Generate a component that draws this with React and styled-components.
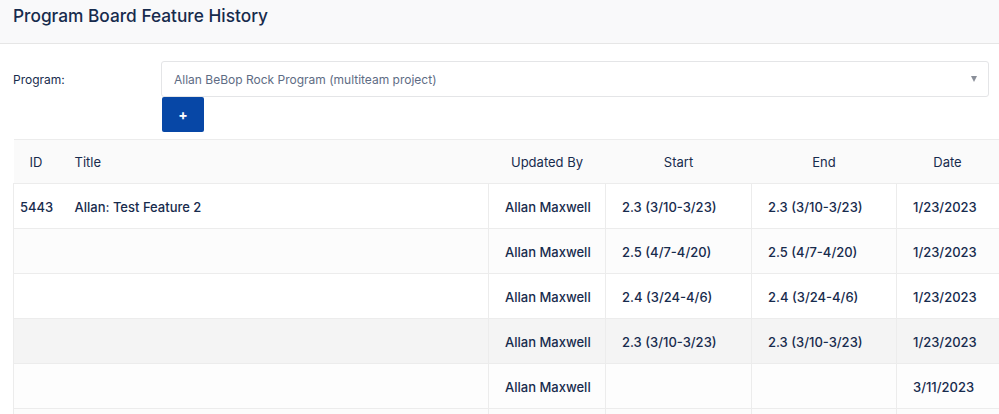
import React from "react";
import styled, { createGlobalStyle } from "styled-components";

const GlobalStyle = createGlobalStyle`
  body {
    margin: 0;
    background: #ffffff;
    font-family: Inter, "Noto Sans", "Liberation Sans", sans-serif;
    color: #172b4d;
  }
`;

const Page = styled.div`
  width: 999px;
  height: 414px;
  overflow: hidden;
`;

const TopBar = styled.header`
  height: 44px;
  background: #f9f9fa;
  border-bottom: 1px solid #e6e6e6;
  padding: 3px 13px 0;
  box-sizing: border-box;
  h1 {
    margin: 0;
    font-size: 17.3px;
    line-height: 26px;
    font-weight: 500;
    color: #172b4d;
  }
`;

const Form = styled.div`
  padding: 17px 10px 0 13px;
`;

const FieldRow = styled.div`
  display: flex;
  align-items: center;
`;

const Label = styled.label`
  width: 148px;
  font-size: 12px;
  color: #172b4d;
`;

const Select = styled.div`
  flex: 1;
  height: 36px;
  box-sizing: border-box;
  border: 1px solid #e4e5e7;
  border-radius: 3px;
  display: flex;
  align-items: center;
  justify-content: space-between;
  padding: 0 11px 0 12px;
  font-size: 12px;
  color: #5e6c84;
`;

const Caret = styled.span`
  width: 0;
  height: 0;
  border-left: 3.5px solid transparent;
  border-right: 3.5px solid transparent;
  border-top: 6px solid #8a8f99;
`;

const AddButton = styled.button`
  margin: 0 0 0 149px;
  width: 42px;
  height: 35px;
  border: none;
  border-radius: 2px;
  background: #0747a6;
  color: #fff;
  font-family: inherit;
  font-size: 14px;
  font-weight: 700;
  padding: 0;
  display: block;
`;

const Table = styled.table`
  margin: 7px 0 0 13px;
  width: 985px;
  border-collapse: collapse;
  table-layout: fixed;
  font-size: 13px;
`;

const HeadRow = styled.tr`
  height: 44px;
  background: #fafafa;
  border-top: 1px solid #ececec;
  border-bottom: 1px solid #ececec;
`;

const Th = styled.th`
  font-weight: 400;
  text-align: ${(p) => p.$align || "center"};
  padding: 0 ${(p) => (p.$align === "left" ? "16px" : "0")};
  color: #172b4d;
`;

const Row = styled.tr`
  height: 45px;
  background: ${(p) => p.$bg};
  border-bottom: 1px solid #ececec;
`;

const Td = styled.td`
  font-weight: 500;
  padding: 1px 0 0 ${(p) => p.$pad || 16}px;
  border-left: ${(p) => (p.$line ? "1px solid #ececec" : "none")};
  white-space: nowrap;
  color: #172b4d;
`;

const rows = [
  { id: "5443", title: "Allan: Test Feature 2", by: "Allan Maxwell", start: "2.3 (3/10-3/23)", end: "2.3 (3/10-3/23)", date: "1/23/2023", bg: "#ffffff" },
  { id: "", title: "", by: "Allan Maxwell", start: "2.5 (4/7-4/20)", end: "2.5 (4/7-4/20)", date: "1/23/2023", bg: "#fcfcfc" },
  { id: "", title: "", by: "Allan Maxwell", start: "2.4 (3/24-4/6)", end: "2.4 (3/24-4/6)", date: "1/23/2023", bg: "#ffffff" },
  { id: "", title: "", by: "Allan Maxwell", start: "2.3 (3/10-3/23)", end: "2.3 (3/10-3/23)", date: "1/23/2023", bg: "#f4f4f4" },
  { id: "", title: "", by: "Allan Maxwell", start: "", end: "", date: "3/11/2023", bg: "#fdfdfd" },
  { id: "", title: "", by: "", start: "", end: "", date: "", bg: "#fcfcfc" },
];

export default function App() {
  return (
    <Page>
      <GlobalStyle />
      <TopBar>
        <h1>Program Board Feature History</h1>
      </TopBar>
      <Form>
        <FieldRow>
          <Label>Program:</Label>
          <Select>
            <span>Allan BeBop Rock Program (multiteam project)</span>
            <Caret />
          </Select>
        </FieldRow>
        <AddButton>+</AddButton>
      </Form>
      <Table>
        <colgroup>
          <col style={{ width: 45 }} />
          <col style={{ width: 430 }} />
          <col style={{ width: 117 }} />
          <col style={{ width: 146 }} />
          <col style={{ width: 145 }} />
          <col style={{ width: 102 }} />
        </colgroup>
        <thead>
          <HeadRow>
            <Th>ID</Th>
            <Th $align="left">Title</Th>
            <Th>Updated By</Th>
            <Th>Start</Th>
            <Th>End</Th>
            <Th>Date</Th>
          </HeadRow>
        </thead>
        <tbody>
          {rows.map((r, i) => (
            <Row key={i} $bg={r.bg}>
              <Td $pad={6} $line>{r.id}</Td>
              <Td>{r.title}</Td>
              <Td $line>{r.by}</Td>
              <Td $line>{r.start}</Td>
              <Td $line>{r.end}</Td>
              <Td $line>{r.date}</Td>
            </Row>
          ))}
        </tbody>
      </Table>
    </Page>
  );
}
